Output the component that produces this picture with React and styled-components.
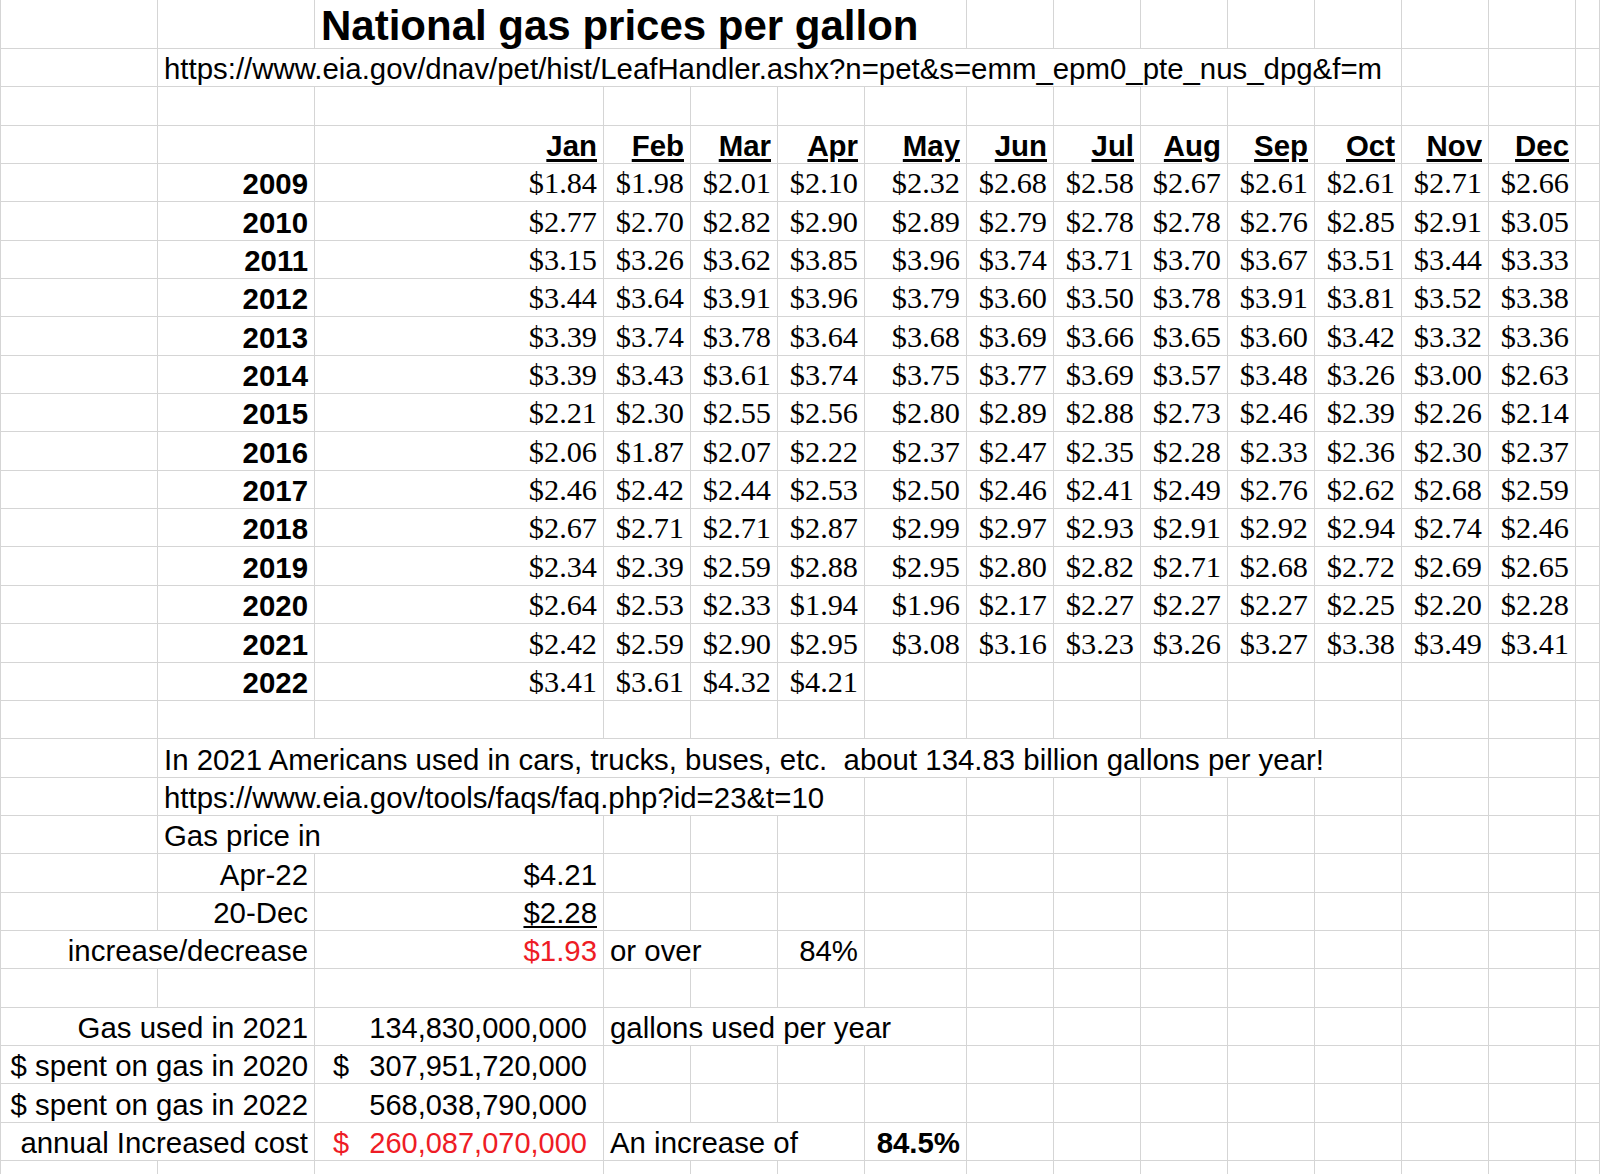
import React from 'react';
import styled, { createGlobalStyle, css } from 'styled-components';

const GRID = '#d5d5d5';
const COLS = '157px 157px 289px 87px 87px 87px 102px 87px 87px 87px 87px 87px 87px 87px 1fr';
const NCOLS = 15;

const GlobalStyle = createGlobalStyle`
  html, body { margin: 0; padding: 0; background: #fff; overflow: hidden; }
  body { font-family: "Liberation Sans", Arial, Helvetica, sans-serif; color: #000; }
  * { box-sizing: border-box; }
`;

const Sheet = styled.div`
  width: 1600px;
  height: 1174px;
  overflow: hidden;
  border-left: 1px solid ${GRID};
  background: #fff;
`;

const Row = styled.div`
  display: grid;
  grid-template-columns: ${COLS};
  height: ${(p) => p.$h}px;
`;

const Cell = styled.div`
  grid-column: span ${(p) => p.$span || 1};
  min-width: 0;
  display: flex;
  align-items: flex-end;
  justify-content: ${(p) => (p.$align === 'right' ? 'flex-end' : 'flex-start')};
  padding: 0 6px 0 6px;
  border-right: 1px solid ${GRID};
  border-bottom: 1px solid ${GRID};
  white-space: pre;
  overflow: hidden;
  font-size: 29.4px;
  font-weight: ${(p) => (p.$bold ? 700 : 400)};
  color: ${(p) => (p.$red ? '#ee1c25' : '#000')};
  ${(p) =>
    p.$serif &&
    css`
      font-family: "Liberation Serif", "Times New Roman", serif;
      font-size: 30.3px;
    `}
  ${(p) =>
    p.$title &&
    css`
      font-size: 42px;
      font-weight: 700;
      line-height: 1;
      padding-bottom: 1px;
      overflow: visible;
    `}
`;

const Accounting = styled(Cell)`
  justify-content: ${(p) => (p.$sign ? 'space-between' : 'flex-end')};
  padding: 0 16px 0 18px;
  font-size: 29px;
`;

const Text = styled.span`
  text-decoration: ${(p) => (p.$under ? 'underline' : 'none')};
  text-underline-offset: 3px;
  text-decoration-thickness: ${(p) => (p.$thick ? '3px' : '2px')};
`;

const MONTHS = ['Jan', 'Feb', 'Mar', 'Apr', 'May', 'Jun', 'Jul', 'Aug', 'Sep', 'Oct', 'Nov', 'Dec'];

const PRICES = [
  ['2009', '1.84 1.98 2.01 2.10 2.32 2.68 2.58 2.67 2.61 2.61 2.71 2.66'],
  ['2010', '2.77 2.70 2.82 2.90 2.89 2.79 2.78 2.78 2.76 2.85 2.91 3.05'],
  ['2011', '3.15 3.26 3.62 3.85 3.96 3.74 3.71 3.70 3.67 3.51 3.44 3.33'],
  ['2012', '3.44 3.64 3.91 3.96 3.79 3.60 3.50 3.78 3.91 3.81 3.52 3.38'],
  ['2013', '3.39 3.74 3.78 3.64 3.68 3.69 3.66 3.65 3.60 3.42 3.32 3.36'],
  ['2014', '3.39 3.43 3.61 3.74 3.75 3.77 3.69 3.57 3.48 3.26 3.00 2.63'],
  ['2015', '2.21 2.30 2.55 2.56 2.80 2.89 2.88 2.73 2.46 2.39 2.26 2.14'],
  ['2016', '2.06 1.87 2.07 2.22 2.37 2.47 2.35 2.28 2.33 2.36 2.30 2.37'],
  ['2017', '2.46 2.42 2.44 2.53 2.50 2.46 2.41 2.49 2.76 2.62 2.68 2.59'],
  ['2018', '2.67 2.71 2.71 2.87 2.99 2.97 2.93 2.91 2.92 2.94 2.74 2.46'],
  ['2019', '2.34 2.39 2.59 2.88 2.95 2.80 2.82 2.71 2.68 2.72 2.69 2.65'],
  ['2020', '2.64 2.53 2.33 1.94 1.96 2.17 2.27 2.27 2.27 2.25 2.20 2.28'],
  ['2021', '2.42 2.59 2.90 2.95 3.08 3.16 3.23 3.26 3.27 3.38 3.49 3.41'],
  ['2022', '3.41 3.61 4.32 4.21'],
];

const E = {};
const R = 38.35;

const ROWS = [
  { h: 49, cells: [E, E, { span: 5, text: 'National gas prices per gallon', title: true }] },
  { h: 38, cells: [E, { span: 11, text: 'https://www.eia.gov/dnav/pet/hist/LeafHandler.ashx?n=pet&s=emm_epm0_pte_nus_dpg&f=m' }] },
  { h: 38.7, cells: [] },
  { h: R, cells: [E, E, ...MONTHS.map((m) => ({ text: m, align: 'right', bold: true, under: true, thick: true }))] },
  ...PRICES.map(([year, list]) => ({
    h: R,
    cells: [
      E,
      { text: year, align: 'right', bold: true },
      ...list.split(' ').map((v) => ({ text: `$${v}`, align: 'right', serif: true })),
    ],
  })),
  { h: R, cells: [] },
  { h: R, cells: [E, { span: 11, text: 'In 2021 Americans used in cars, trucks, buses, etc.  about 134.83 billion gallons per year!' }] },
  { h: R, cells: [E, { span: 5, text: 'https://www.eia.gov/tools/faqs/faq.php?id=23&t=10' }] },
  { h: R, cells: [E, { span: 2, text: 'Gas price in' }] },
  { h: R, cells: [E, { text: 'Apr-22', align: 'right' }, { text: '$4.21', align: 'right' }] },
  { h: R, cells: [E, { text: '20-Dec', align: 'right' }, { text: '$2.28', align: 'right', under: true }] },
  {
    h: R,
    cells: [
      { span: 2, text: 'increase/decrease', align: 'right' },
      { text: '$1.93', align: 'right', red: true },
      { span: 2, text: 'or over' },
      { text: '84%', align: 'right' },
    ],
  },
  { h: R, cells: [] },
  {
    h: R,
    cells: [
      { span: 2, text: 'Gas used in 2021', align: 'right' },
      { acct: true, value: '134,830,000,000' },
      { span: 4, text: 'gallons used per year' },
    ],
  },
  { h: R, cells: [{ span: 2, text: '$ spent on gas in 2020', align: 'right' }, { acct: true, sign: '$', value: '307,951,720,000' }] },
  { h: R, cells: [{ span: 2, text: '$ spent on gas in 2022', align: 'right' }, { acct: true, value: '568,038,790,000' }] },
  {
    h: R,
    cells: [
      { span: 2, text: 'annual Increased cost', align: 'right' },
      { acct: true, sign: '$', value: '260,087,070,000', red: true },
      { span: 3, text: 'An increase of' },
      { text: '84.5%', align: 'right', bold: true },
    ],
  },
  { h: 38, cells: [] },
];

function fillRow(cells) {
  const out = [...cells];
  let used = out.reduce((n, c) => n + (c.span || 1), 0);
  while (used < NCOLS) {
    out.push(E);
    used += 1;
  }
  return out;
}

function SheetCell({ c }) {
  if (c.acct) {
    return (
      <Accounting $sign={!!c.sign} $red={c.red}>
        {c.sign && <Text>{c.sign}</Text>}
        <Text>{c.value}</Text>
      </Accounting>
    );
  }
  return (
    <Cell
      $span={c.span}
      $align={c.align}
      $bold={c.bold}
      $serif={c.serif}
      $red={c.red}
      $title={c.title}
    >
      {c.text && (
        <Text $under={c.under} $thick={c.thick}>
          {c.text}
        </Text>
      )}
    </Cell>
  );
}

export default function App() {
  return (
    <>
      <GlobalStyle />
      <Sheet>
        {ROWS.map((row, i) => (
          <Row key={i} $h={row.h}>
            {fillRow(row.cells).map((c, j) => (
              <SheetCell key={j} c={c} />
            ))}
          </Row>
        ))}
      </Sheet>
    </>
  );
}
